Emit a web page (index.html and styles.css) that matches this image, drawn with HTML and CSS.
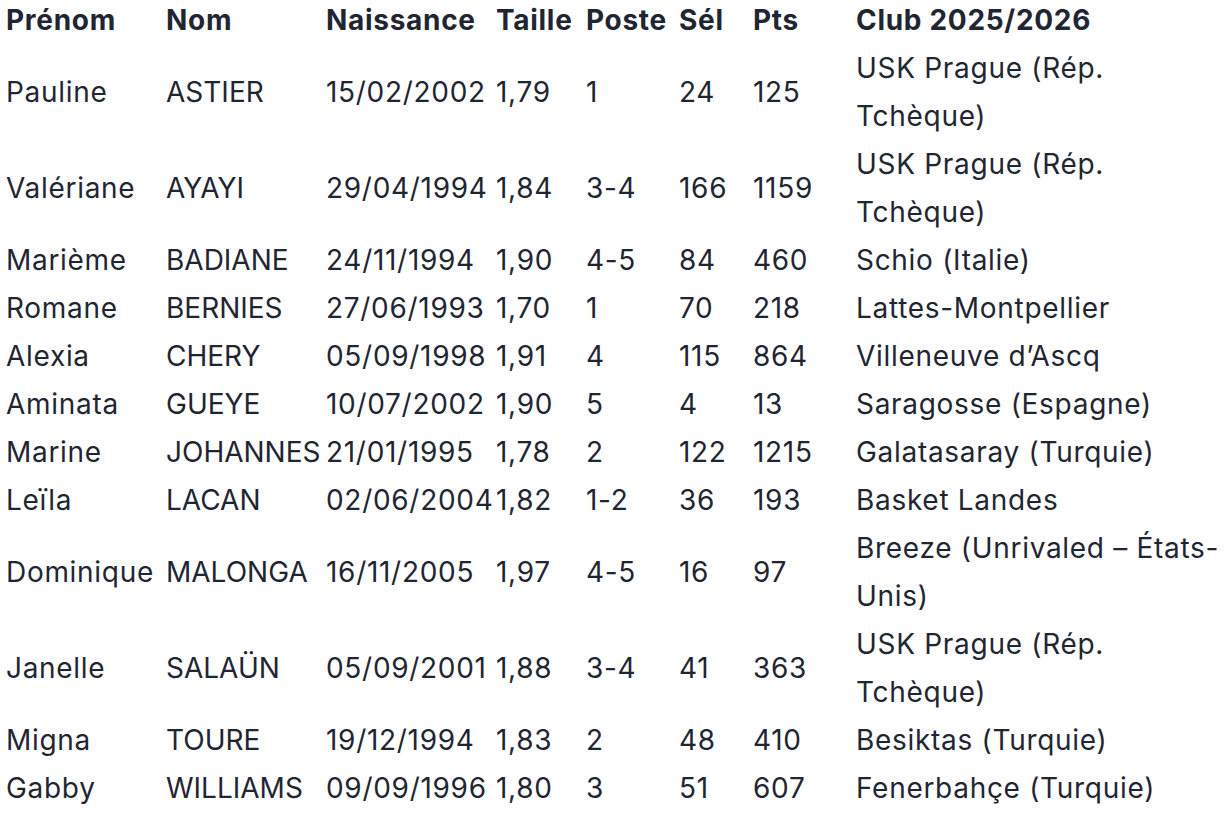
FILE: index.html
```html
<!DOCTYPE html>
<html lang="fr">
<head>
<meta charset="utf-8">
<title>Équipe</title>
<link rel="stylesheet" href="styles.css">
</head>
<body>
<table class="roster">
  <colgroup>
    <col class="c-prenom"><col class="c-nom"><col class="c-naiss"><col class="c-taille"><col class="c-poste"><col class="c-sel"><col class="c-pts"><col class="c-club">
  </colgroup>
  <thead>
    <tr><th>Prénom</th><th>Nom</th><th>Naissance</th><th>Taille</th><th>Poste</th><th>Sél</th><th>Pts</th><th>Club 2025/2026</th></tr>
  </thead>
  <tbody>
    <tr><td>Pauline</td><td class="caps">ASTIER</td><td>15/02/2002</td><td>1,79</td><td>1</td><td>24</td><td>125</td><td>USK Prague (Rép. Tchèque)</td></tr>
    <tr><td>Valériane</td><td class="caps">AYAYI</td><td>29/04/1994</td><td>1,84</td><td>3-4</td><td>166</td><td>1159</td><td>USK Prague (Rép. Tchèque)</td></tr>
    <tr><td>Marième</td><td class="caps">BADIANE</td><td>24/11/1994</td><td>1,90</td><td>4-5</td><td>84</td><td>460</td><td>Schio (Italie)</td></tr>
    <tr><td>Romane</td><td class="caps">BERNIES</td><td>27/06/1993</td><td>1,70</td><td>1</td><td>70</td><td>218</td><td>Lattes-Montpellier</td></tr>
    <tr><td>Alexia</td><td class="caps">CHERY</td><td>05/09/1998</td><td>1,91</td><td>4</td><td>115</td><td>864</td><td>Villeneuve d’Ascq</td></tr>
    <tr><td>Aminata</td><td class="caps">GUEYE</td><td>10/07/2002</td><td>1,90</td><td>5</td><td>4</td><td>13</td><td>Saragosse (Espagne)</td></tr>
    <tr><td>Marine</td><td class="caps">JOHANNES</td><td>21/01/1995</td><td>1,78</td><td>2</td><td>122</td><td>1215</td><td>Galatasaray (Turquie)</td></tr>
    <tr><td>Leïla</td><td class="caps">LACAN</td><td>02/06/2004</td><td>1,82</td><td>1-2</td><td>36</td><td>193</td><td>Basket Landes</td></tr>
    <tr><td>Dominique</td><td class="caps">MALONGA</td><td>16/11/2005</td><td>1,97</td><td>4-5</td><td>16</td><td>97</td><td>Breeze (Unrivaled – États-Unis)</td></tr>
    <tr><td>Janelle</td><td class="caps">SALAÜN</td><td>05/09/2001</td><td>1,88</td><td>3-4</td><td>41</td><td>363</td><td>USK Prague (Rép. Tchèque)</td></tr>
    <tr><td>Migna</td><td class="caps">TOURE</td><td>19/12/1994</td><td>1,83</td><td>2</td><td>48</td><td>410</td><td>Besiktas (Turquie)</td></tr>
    <tr><td>Gabby</td><td class="caps">WILLIAMS</td><td>09/09/1996</td><td>1,80</td><td>3</td><td>51</td><td>607</td><td>Fenerbahçe (Turquie)</td></tr>
  </tbody>
</table>
</body>
</html>
```
FILE: styles.css
```css
html, body {
  margin: 0;
  padding: 0;
  background: #ffffff;
}
body {
  font-family: Inter, "Noto Sans", sans-serif;
  font-size: 28px;
  color: #1f2633;
}
.roster {
  margin-left: 6px;
  width: 1219px;
  border-collapse: collapse;
  table-layout: fixed;
}
.roster th, .roster td {
  padding: 0;
  text-align: left;
  vertical-align: middle;
  letter-spacing: 0.7px;
}
.roster th {
  font-weight: 700;
  line-height: 40px;
  padding-bottom: 4px;
}
.roster td {
  font-weight: 400;
  line-height: 48px;
}
.roster td.caps {
  letter-spacing: 0;
}
.c-prenom { width: 160px; }
.c-nom { width: 160px; }
.c-naiss { width: 170px; }
.c-taille { width: 90px; }
.c-poste { width: 93px; }
.c-sel { width: 74px; }
.c-pts { width: 103px; }
.c-club { width: 369px; }
```
